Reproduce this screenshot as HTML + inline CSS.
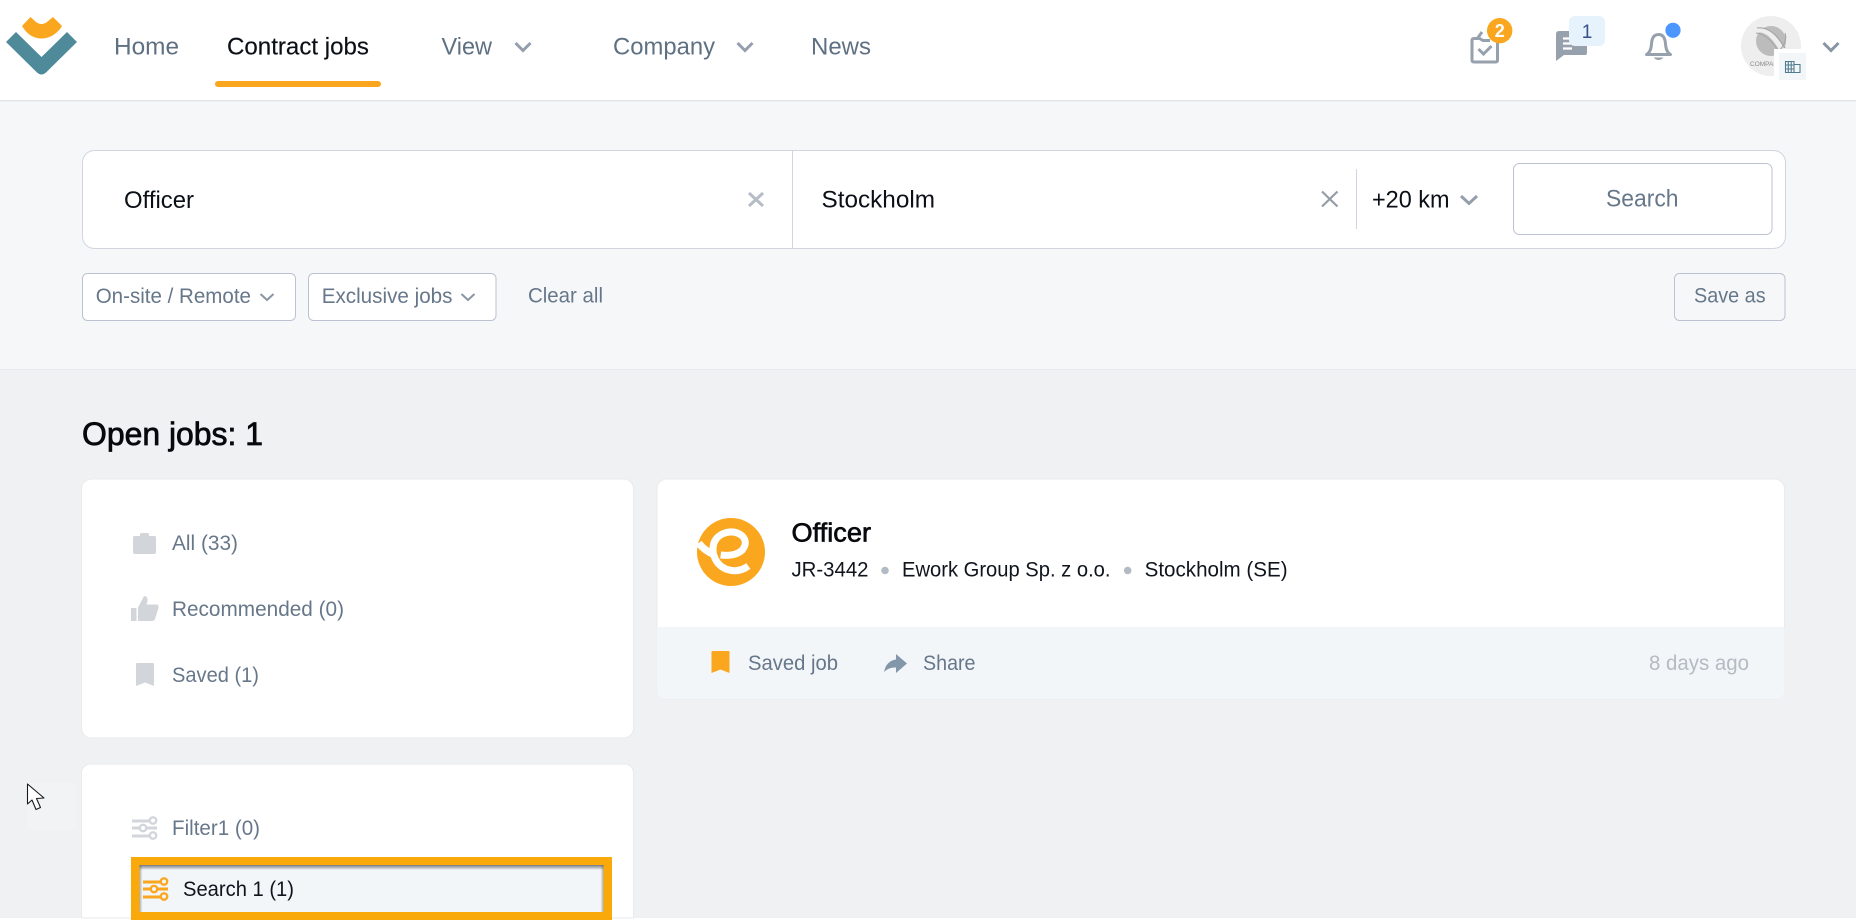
<!DOCTYPE html>
<html><head><meta charset="utf-8"><title>Contract jobs</title>
<style>
html,body{margin:0;padding:0;background:#fff;width:1856px;height:920px;overflow:hidden}
svg{display:block;position:absolute;left:0;top:0}
text{font-family:"Liberation Sans",sans-serif;font-size:21.5px;fill:#67778a}
.nav{font-size:24.5px;fill:#5f7082}
</style></head><body>
<svg width="1856" height="920" viewBox="0 0 1856 920" xmlns="http://www.w3.org/2000/svg">
<defs>
<linearGradient id="tg" x1="0" y1="0" x2="0" y2="1"><stop offset="0" stop-color="#5f6266" stop-opacity=".85"/><stop offset="1" stop-color="#5f6266" stop-opacity="0"/></linearGradient>
<linearGradient id="lg" x1="0" y1="0" x2="1" y2="0"><stop offset="0" stop-color="#5f6266" stop-opacity=".5"/><stop offset="1" stop-color="#5f6266" stop-opacity="0"/></linearGradient>
<linearGradient id="rg" x1="1" y1="0" x2="0" y2="0"><stop offset="0" stop-color="#5f6266" stop-opacity=".5"/><stop offset="1" stop-color="#5f6266" stop-opacity="0"/></linearGradient>
<clipPath id="av"><circle cx="1771" cy="46" r="30"/></clipPath>
</defs>
<!-- backgrounds -->
<rect width="1856" height="920" fill="#f0f1f3"/>
<rect width="1856" height="100" fill="#fff"/>
<rect y="100" width="1856" height="269" fill="#f6f7f9"/>
<rect y="100" width="1856" height="1.5" fill="#e4e5ea"/>
<rect y="369" width="1856" height="1" fill="#e8e9ec"/>
<rect y="918" width="1856" height="2" fill="#fff"/>

<!-- logo -->
<path d="M22 26 L30.5 17 L36 22 Q41.5 26 47 22 L53 17 L62 26 L60 29 Q52 38.5 41.5 38.5 Q31 38.5 24 29 Z" fill="#faa61f"/>
<path d="M6 42 L16 32 L41.5 57 L67 32 L77 42 L46 72.5 Q41.5 76.5 37 72.5 Z" fill="#4f8a9b"/>

<!-- nav -->
<text class="nav" x="114" y="54.5" textLength="65" lengthAdjust="spacingAndGlyphs">Home</text>
<text class="nav" x="227" y="54.5" textLength="142" lengthAdjust="spacingAndGlyphs" style="fill:#0b0f16;stroke:#0b0f16;stroke-width:.15px">Contract jobs</text>
<rect x="215" y="81" width="166" height="6" rx="3" fill="#faa61f"/>
<text class="nav" x="441.5" y="54.5" textLength="50.5" lengthAdjust="spacingAndGlyphs">View</text>
<path d="M515.5 43 L523 50.5 L530.5 43" fill="none" stroke="#959eac" stroke-width="3"/>
<text class="nav" x="613" y="54.5" textLength="102" lengthAdjust="spacingAndGlyphs">Company</text>
<path d="M737.5 43 L745 50.5 L752.5 43" fill="none" stroke="#959eac" stroke-width="3"/>
<text class="nav" x="811" y="54.5" textLength="60" lengthAdjust="spacingAndGlyphs">News</text>

<!-- clipboard icon -->
<path d="M1479 38.5 H1474 Q1472 38.5 1472 40.5 V60 Q1472 62 1474 62 H1495.5 Q1497.5 62 1497.5 60 V42" fill="none" stroke="#97a1ae" stroke-width="3"/>
<path d="M1482 32 L1478 37.5 L1483 40.5 H1490" fill="none" stroke="#97a1ae" stroke-width="3"/>
<path d="M1478.5 49 L1483.5 54 L1491.5 46" fill="none" stroke="#97a1ae" stroke-width="3"/>
<circle cx="1499.7" cy="30.7" r="12.7" fill="#faa61f"/>
<text x="1499.7" y="37" text-anchor="middle" style="font-size:18px;font-weight:bold;fill:#fff">2</text>
<!-- message icon -->
<path d="M1559 31 H1585 Q1587 31 1587 33 V53 Q1587 55 1585 55 H1564 L1556 61 V34 Q1556 31 1559 31 Z" fill="#97a1ae"/>
<path d="M1563 38.5 H1576 M1563 43.5 H1576 M1563 48.5 H1572" stroke="#fff" stroke-width="2.2"/>
<rect x="1569" y="16" width="36" height="30" rx="6" fill="#e6f3fd"/>
<text x="1587" y="38" text-anchor="middle" style="font-size:19px;fill:#3b4f8a">1</text>
<!-- bell -->
<path d="M1646.5 54.5 Q1651 52 1651.5 44 Q1652 34.5 1658.5 34.5 Q1665 34.5 1665.5 44 Q1666 52 1670.5 54.5 Z" fill="none" stroke="#97a1ae" stroke-width="3" stroke-linejoin="round"/>
<path d="M1653.5 57.5 Q1658.5 62.5 1663.5 57.5 Z" fill="#97a1ae"/>
<circle cx="1673" cy="30.3" r="7.6" fill="#4b96ff"/>
<!-- avatar -->
<circle cx="1771" cy="46" r="30" fill="#eee"/>
<g clip-path="url(#av)">
<circle cx="1771" cy="41" r="15" fill="#bcbcbc"/>
<path d="M1757 30 Q1770 28 1782 50" fill="none" stroke="#eee" stroke-width="5"/>
<path d="M1757 28 Q1772 26 1785 48 M1756 33 Q1768 34 1779 52" fill="none" stroke="#a5a5a5" stroke-width="1.1"/>
<path d="M1785 33 Q1788 42 1778 52" fill="none" stroke="#a5a5a5" stroke-width="1.1"/>
<text x="1750" y="66" style="font-size:6.5px;fill:#8a8a8a">COMPANY</text>
</g>
<rect x="1774" y="49" width="32" height="31" fill="#fff"/>
<rect x="1779" y="53" width="27" height="27" fill="#f3f6f9"/>
<path d="M1785.5 61.5 H1794 V72.5 H1785.5 Z M1794 64.5 H1800 V72.5 H1794 M1785.5 65 H1794 M1785.5 69 H1794 M1788.3 61.5 V72.5 M1791.2 61.5 V72.5" fill="none" stroke="#4f7a8f" stroke-width="1.1"/>
<path d="M1823.5 43 L1831 50.5 L1838.5 43" fill="none" stroke="#8895a5" stroke-width="3"/>

<!-- search box -->
<rect x="82.5" y="150.5" width="1703" height="98" rx="12" fill="#fff" stroke="#d2d5e1"/>
<rect x="792" y="151" width="1" height="97" fill="#d2d5e1"/>
<rect x="1356" y="169" width="1" height="60" fill="#d2d5e1"/>
<text x="124" y="208" textLength="70" lengthAdjust="spacingAndGlyphs" style="font-size:24px;fill:#0b0f16">Officer</text>
<path d="M749 193 L763 206 M763 193 L749 206" stroke="#b5bcc6" stroke-width="3"/>
<text x="821.5" y="207.5" textLength="113.5" lengthAdjust="spacingAndGlyphs" style="font-size:24px;fill:#0b0f16">Stockholm</text>
<path d="M1322 191.5 L1337.5 206.5 M1337.5 191.5 L1322 206.5" stroke="#959ca6" stroke-width="2.2"/>
<text x="1372" y="207.5" textLength="77.5" lengthAdjust="spacingAndGlyphs" style="font-size:24px;fill:#0b0f16">+20 km</text>
<path d="M1461 196 L1469 203.5 L1477 196" fill="none" stroke="#959eac" stroke-width="3"/>
<rect x="1513.5" y="163.5" width="258.5" height="71" rx="6" fill="#fff" stroke="#bcc2d1" stroke-width="1"/>
<text x="1606" y="206.5" textLength="72.5" lengthAdjust="spacingAndGlyphs" style="font-size:24px">Search</text>

<!-- filters -->
<rect x="82.5" y="273.5" width="213" height="47" rx="5" fill="#fff" stroke="#bcc2d1"/>
<text x="95.7" y="303" textLength="155.3" lengthAdjust="spacingAndGlyphs" style="font-size:21.5px">On-site / Remote</text>
<path d="M260.5 294 L267 300 L273.5 294" fill="none" stroke="#8a95a5" stroke-width="2"/>
<rect x="308.5" y="273.5" width="187.5" height="47" rx="5" fill="#fff" stroke="#bcc2d1"/>
<text x="321.7" y="303" textLength="130.8" lengthAdjust="spacingAndGlyphs" style="font-size:21.5px">Exclusive jobs</text>
<path d="M461.5 294 L468 300 L474.5 294" fill="none" stroke="#8a95a5" stroke-width="2"/>
<text x="528" y="302.5" textLength="75" lengthAdjust="spacingAndGlyphs" style="font-size:21.5px">Clear all</text>
<rect x="1674.5" y="273.5" width="110.5" height="47" rx="5" fill="#f6f7f9" stroke="#bcc2d1"/>
<text x="1694" y="302.5" textLength="71.6" lengthAdjust="spacingAndGlyphs" style="font-size:21.5px">Save as</text>

<!-- heading -->
<text x="82" y="445" textLength="181" lengthAdjust="spacingAndGlyphs" style="font-size:32px;fill:#07090d;stroke:#07090d;stroke-width:.75px">Open jobs: 1</text>

<!-- card 1 -->
<rect x="81.5" y="479" width="552" height="259" rx="10" fill="#fff" stroke="#e9eaed"/>
<path d="M133 537.5 Q133 536 134.5 536 H140 V534.5 Q140 533 141.5 533 H147.5 Q149 533 149 534.5 V536 H154.5 Q156 536 156 537.5 V552 Q156 554 154 554 H135 Q133 554 133 552 Z" fill="#d2d6db"/>
<text x="172" y="550" textLength="66" lengthAdjust="spacingAndGlyphs">All (33)</text>
<path d="M131 608 H136.5 V621 H131 Z M138 607.5 L144 596 Q148 596 147.5 601 L146.5 604.5 H157 Q159 605 158.5 608 L155 619 Q154.5 621 152 621 H138 Z" fill="#d2d6db"/>
<text x="172" y="616" textLength="172" lengthAdjust="spacingAndGlyphs">Recommended (0)</text>
<path d="M136 664 Q136 663 137 663 H153 Q154 663 154 664 V686 L145 682.5 L136 686 Z" fill="#d2d6db"/>
<text x="172" y="682" textLength="87" lengthAdjust="spacingAndGlyphs">Saved (1)</text>

<!-- job card -->
<rect x="657" y="479" width="1127.5" height="220" rx="10" fill="#fff" stroke="#e9eaed"/>
<path d="M657 627 H1784.5 V689 Q1784.5 699 1774.5 699 H667 Q657 699 657 689 Z" fill="#f3f6f9"/>
<circle cx="731" cy="552" r="34" fill="#faa61f"/>
<g transform="translate(680 505) scale(.3333)" fill="none" stroke="#fff" stroke-linecap="butt">
<path d="M205 183 Q175 205 140 193 Q108 180 100 145 Q94 105 125 88 Q160 72 186 92 Q206 112 186 136 Q165 155 122 150" stroke-width="21"/>
<path d="M56 114 Q72 136 104 150" stroke-width="22"/>
</g>
<text x="791.5" y="541.5" textLength="79.5" lengthAdjust="spacingAndGlyphs" style="font-size:25.5px;fill:#07090d;stroke:#07090d;stroke-width:.65px">Officer</text>
<text x="791.5" y="576.5" textLength="77" lengthAdjust="spacingAndGlyphs" style="font-size:21.5px;fill:#10151d">JR-3442</text>
<circle cx="885" cy="570.5" r="3.8" fill="#b2bbc4"/>
<text x="902" y="576.5" textLength="208.5" lengthAdjust="spacingAndGlyphs" style="font-size:21.5px;fill:#10151d">Ework Group Sp. z o.o.</text>
<circle cx="1127.7" cy="570.5" r="3.8" fill="#b2bbc4"/>
<text x="1144.6" y="576.5" textLength="143" lengthAdjust="spacingAndGlyphs" style="font-size:21.5px;fill:#10151d">Stockholm (SE)</text>
<path d="M711.5 652 Q711.5 651 712.5 651 H728.5 Q729.5 651 729.5 652 V673 L720.5 669.5 L711.5 673 Z" fill="#faa61f"/>
<text x="748" y="670" textLength="90" lengthAdjust="spacingAndGlyphs" style="font-size:21.5px">Saved job</text>
<path d="M896 654 L907 663.5 L896 673 V667.5 Q889 667 884 672 Q886 661 896 659.5 Z" fill="#8397aa"/>
<text x="923" y="670" textLength="52.5" lengthAdjust="spacingAndGlyphs" style="font-size:21.5px">Share</text>
<text x="1649" y="670" textLength="100" lengthAdjust="spacingAndGlyphs" style="font-size:21.5px;fill:#b4bbc3">8 days ago</text>

<!-- cursor -->
<rect x="27" y="783" width="49" height="47" fill="#f2f3f5"/>
<path d="M27.5 784 V804 L32 800 L36 809.5 L40.5 807.5 L36.5 798.5 L44 798 Z" fill="#fff" stroke="#1a1a1a" stroke-width="1.1" stroke-linejoin="round"/>

<!-- card 3 -->
<path d="M81.5 918 V774 Q81.5 764 91.5 764 H623.5 Q633.5 764 633.5 774 V918 Z" fill="#fff" stroke="#e9eaed"/>
<rect y="918" width="82" height="2" fill="#fff"/>
<g fill="none" stroke="#d2d6db" stroke-width="3">
<path d="M132 821 H150 M132 828 H139 M147 828 H157 M132 836 H150"/>
</g>
<g fill="#fff" stroke="#d2d6db" stroke-width="2.4">
<circle cx="153" cy="820.5" r="3.2"/><circle cx="143" cy="828" r="3.2"/><circle cx="153" cy="835.5" r="3.2"/>
</g>
<text x="172" y="835" textLength="88" lengthAdjust="spacingAndGlyphs">Filter1 (0)</text>

<!-- highlight -->
<rect x="131" y="857" width="481" height="63" fill="#f9a90a"/>
<rect x="139.5" y="865" width="464" height="47" fill="#f3f6f9"/>
<rect x="139.5" y="865" width="464" height="5" fill="url(#tg)"/>
<rect x="139.5" y="865" width="3" height="47" fill="url(#lg)"/>
<rect x="600.5" y="865" width="3" height="47" fill="url(#rg)"/>
<g fill="none" stroke="#faa61f" stroke-width="3">
<path d="M143 882 H161 M143 889 H150 M158 889 H168 M143 897 H161"/>
</g>
<g fill="#f3f6f9" stroke="#faa61f" stroke-width="2.4">
<circle cx="164" cy="881.5" r="3.2"/><circle cx="154" cy="889" r="3.2"/><circle cx="164" cy="896.5" r="3.2"/>
</g>
<text x="183" y="896" textLength="111" lengthAdjust="spacingAndGlyphs" style="fill:#10151d">Search 1 (1)</text>
</svg>
</body></html>
